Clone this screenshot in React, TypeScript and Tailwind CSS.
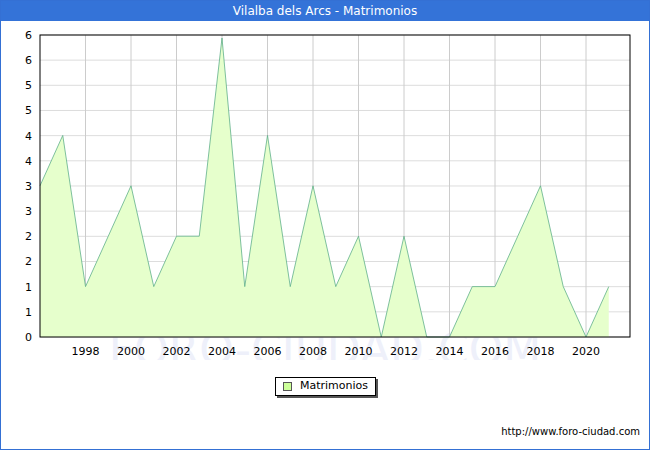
const vals = [3,4,1,2,3,1,2,2,6,1,4,1,3,1,2,0,2,0,0,1,1,2,3,1,0,1];
const X0 = 40, X1 = 630, Y0 = 337, YT = 35;
const xs = (i: number) => X0 + i * 22.75;
const ys = (v: number) => Y0 - v * 50.4;

export default function App() {
  const pts = vals.map((v, i) => `${xs(i)},${v === 6 ? 38 : ys(v)}`).join(" ");
  const area = `${X0},${Y0} ${pts} ${xs(25)},${Y0}`;
  const ylabels = ["0","1","1","2","2","3","3","4","4","5","5","6","6"];
  return (
    <div className="w-[650px] h-[450px] border border-[#3470d4] bg-white flex flex-col" style={{ fontFamily: "Verdana, 'DejaVu Sans', sans-serif" }}>
      <div className="h-[20px] bg-[#3473d8] text-white text-[12px] flex items-center justify-center shrink-0">Vilalba dels Arcs - Matrimonios</div>
      <svg width="648" height="339" viewBox="1 21 648 339" className="shrink-0">
        <text x="325" y="365" textAnchor="middle" fontSize="44" fill="#eef0fa" fontFamily="Verdana, 'DejaVu Sans', sans-serif">FORO-CIUDAD.COM</text>
        {ylabels.map((_, k) => { const y = Y0 - k * 25.17; return <line key={k} x1={X0} x2={X1} y1={y} y2={y} stroke="#dddddd" strokeWidth="1" />; })}
        {Array.from({ length: 12 }, (_, k) => { const x = xs(2 + 2 * k); return <line key={k} x1={x} x2={x} y1={YT} y2={Y0} stroke="#cccccc" />; })}
        <polygon points={area} fill="#e6ffcc" />
        <polyline points={pts} fill="none" stroke="#5fb08a" strokeWidth="0.8" />
        <rect x={X0} y={YT} width={X1 - X0} height={Y0 - YT} fill="none" stroke="#000" strokeWidth="1" />
        {ylabels.map((l, k) => <text key={k} x="32" y={Y0 - k * 25.17 + 4} textAnchor="end" fontSize="11" fill="#000">{l}</text>)}
        {Array.from({ length: 12 }, (_, k) => <text key={k} x={xs(2 + 2 * k)} y="355" textAnchor="middle" fontSize="11" fill="#000">{1998 + 2 * k}</text>)}
      </svg>
      <div className="flex justify-center mt-[17px] pl-[1px]">
        <div className="flex items-center gap-[8px] border border-black bg-white px-[7px] h-[19px] text-[11px] shadow-[2px_2px_0_#555]">
          <span className="w-[9px] h-[9px] border border-[#555] bg-[#ccff99]" />
          <span>Matrimonios</span>
        </div>
      </div>
      <div className="flex-1" />
      <div className="text-right text-[10px] pr-[9px] pb-[10px]">http://www.foro-ciudad.com</div>
    </div>
  );
}
